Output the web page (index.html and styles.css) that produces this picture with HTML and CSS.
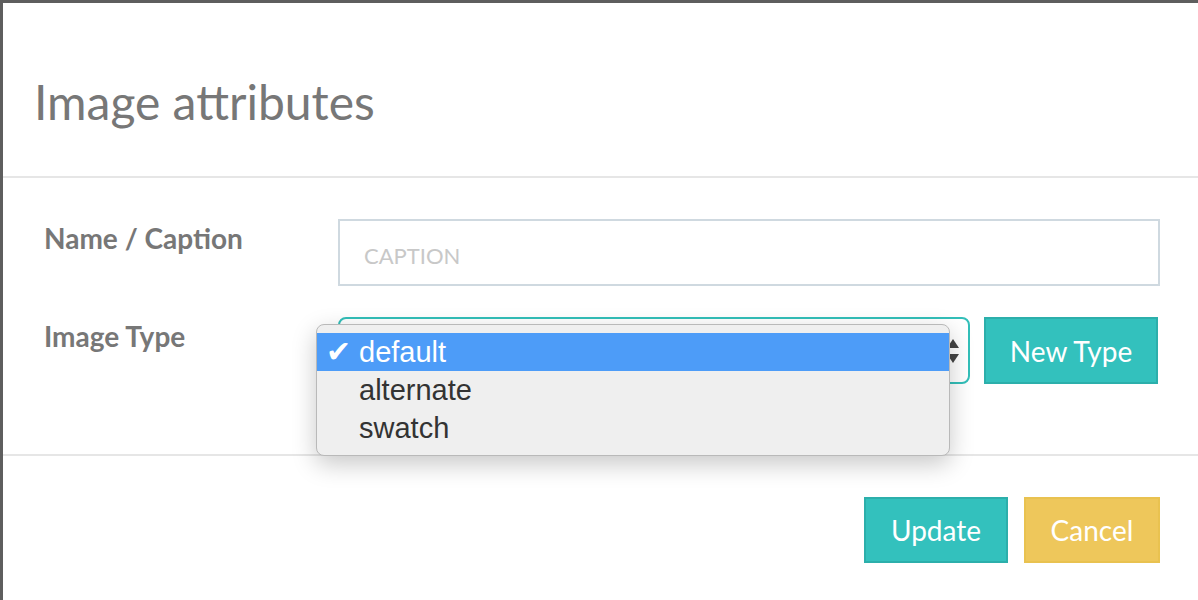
FILE: index.html
```html
<!DOCTYPE html>
<html lang="en">
<head>
    <meta charset="UTF-8">
    <meta name="viewport" content="width=device-width, initial-scale=1.0">
    <title>Image attributes</title>
    <link rel="stylesheet" href="styles.css">
</head>
<body>

    <div class="modal">
        <div class="modal-header">
            <h2>Image attributes</h2>
        </div>

        <div class="modal-body">
            <div class="form-row">
                <label for="caption">Name / Caption</label>
                <input type="text" id="caption" class="field" placeholder="CAPTION">
            </div>

            <div class="form-row">
                <label>Image Type</label>
                <div class="select-wrap">
                    <div class="select-box">
                        <svg class="select-arrows" width="14" height="28" viewBox="0 0 14 28">
                            <path d="M7 2 L13 11 L1 11 Z" fill="#444"/>
                            <path d="M1 17 L13 17 L7 26 Z" fill="#444"/>
                        </svg>
                    </div>
                    <ul class="dropdown">
                        <li class="active"><span class="check">&#10004;</span>default</li>
                        <li>alternate</li>
                        <li>swatch</li>
                    </ul>
                </div>
                <button class="btn btn-teal btn-new">New Type</button>
            </div>
        </div>

        <div class="modal-footer">
            <button class="btn btn-teal btn-update">Update</button>
            <button class="btn btn-yellow btn-cancel">Cancel</button>
        </div>
    </div>

</body>
</html>
```

FILE: styles.css
```css
body {
    margin: 0;
    background-color: #5e5e5e;
    font-family: Lato, "Open Sans", sans-serif;
    overflow: hidden;
}
.modal {
    margin: 3px 0 0 3px;
    height: 597px;
    background: white;
}
.modal-header {
    height: 175px;
    border-bottom: 2px solid #e6e6e6;
    padding: 0 31px;
    box-sizing: border-box;
}
.modal-header h2 {
    margin: 0;
    padding-top: 73px;
    font-size: 48px;
    line-height: 52px;
    font-weight: normal;
    color: #777;
}
.modal-body {
    padding: 41px 38px 0 41px;
    height: 278px;
    box-sizing: border-box;
    border-bottom: 2px solid #e6e6e6;
}
.form-row {
    display: flex;
    align-items: flex-start;
    margin-bottom: 31px;
}
.form-row label {
    width: 294px;
    flex-shrink: 0;
    font-size: 28px;
    font-weight: bold;
    color: #777;
    padding-top: 2px;
}
.field {
    flex: 1;
    height: 67px;
    box-sizing: border-box;
    border: 2px solid #cfd9e0;
    padding: 6px 24px 0;
    font-family: Lato, sans-serif;
    font-size: 22px;
    outline: none;
}
.field::placeholder {
    color: #c8c8c8;
}
.select-wrap {
    position: relative;
    width: 632px;
    margin-right: 14px;
}
.select-box {
    height: 67px;
    box-sizing: border-box;
    border: 2px solid #33bfb9;
    border-radius: 8px;
    display: flex;
    align-items: center;
    justify-content: flex-end;
    padding-right: 8px;
}
.dropdown {
    position: absolute;
    left: -22px;
    top: 7px;
    width: 634px;
    height: 132px;
    box-sizing: border-box;
    margin: 0;
    padding: 8px 0 0;
    list-style: none;
    background: #efefef;
    border: 1px solid #b9b9b9;
    border-radius: 8px;
    box-shadow: 0 8px 24px rgba(0, 0, 0, 0.22);
    font-family: "Liberation Sans", Arial, sans-serif;
    font-size: 29px;
    color: #333;
}
.dropdown li {
    height: 38px;
    line-height: 38px;
    padding-left: 42px;
    position: relative;
}
.dropdown li.active {
    background: #4d9cf8;
    color: white;
}
.check {
    position: absolute;
    left: 9px;
    font-size: 30px;
    font-family: "DejaVu Sans", sans-serif;
}
.btn {
    font-family: Lato, sans-serif;
    font-size: 28px;
    color: white;
    border: 2px solid transparent;
    box-sizing: border-box;
    cursor: pointer;
}
.btn-teal {
    background-color: #33c1bd;
    border-color: #2cafab;
}
.btn-yellow {
    background-color: #eec75b;
    border-color: #e9c250;
}
.btn-new {
    width: 174px;
    height: 67px;
}
.modal-footer {
    display: flex;
    justify-content: flex-end;
    gap: 16px;
    padding: 41px 38px 0 0;
}
.btn-update {
    width: 144px;
    height: 66px;
}
.btn-cancel {
    width: 136px;
    height: 66px;
}
```
